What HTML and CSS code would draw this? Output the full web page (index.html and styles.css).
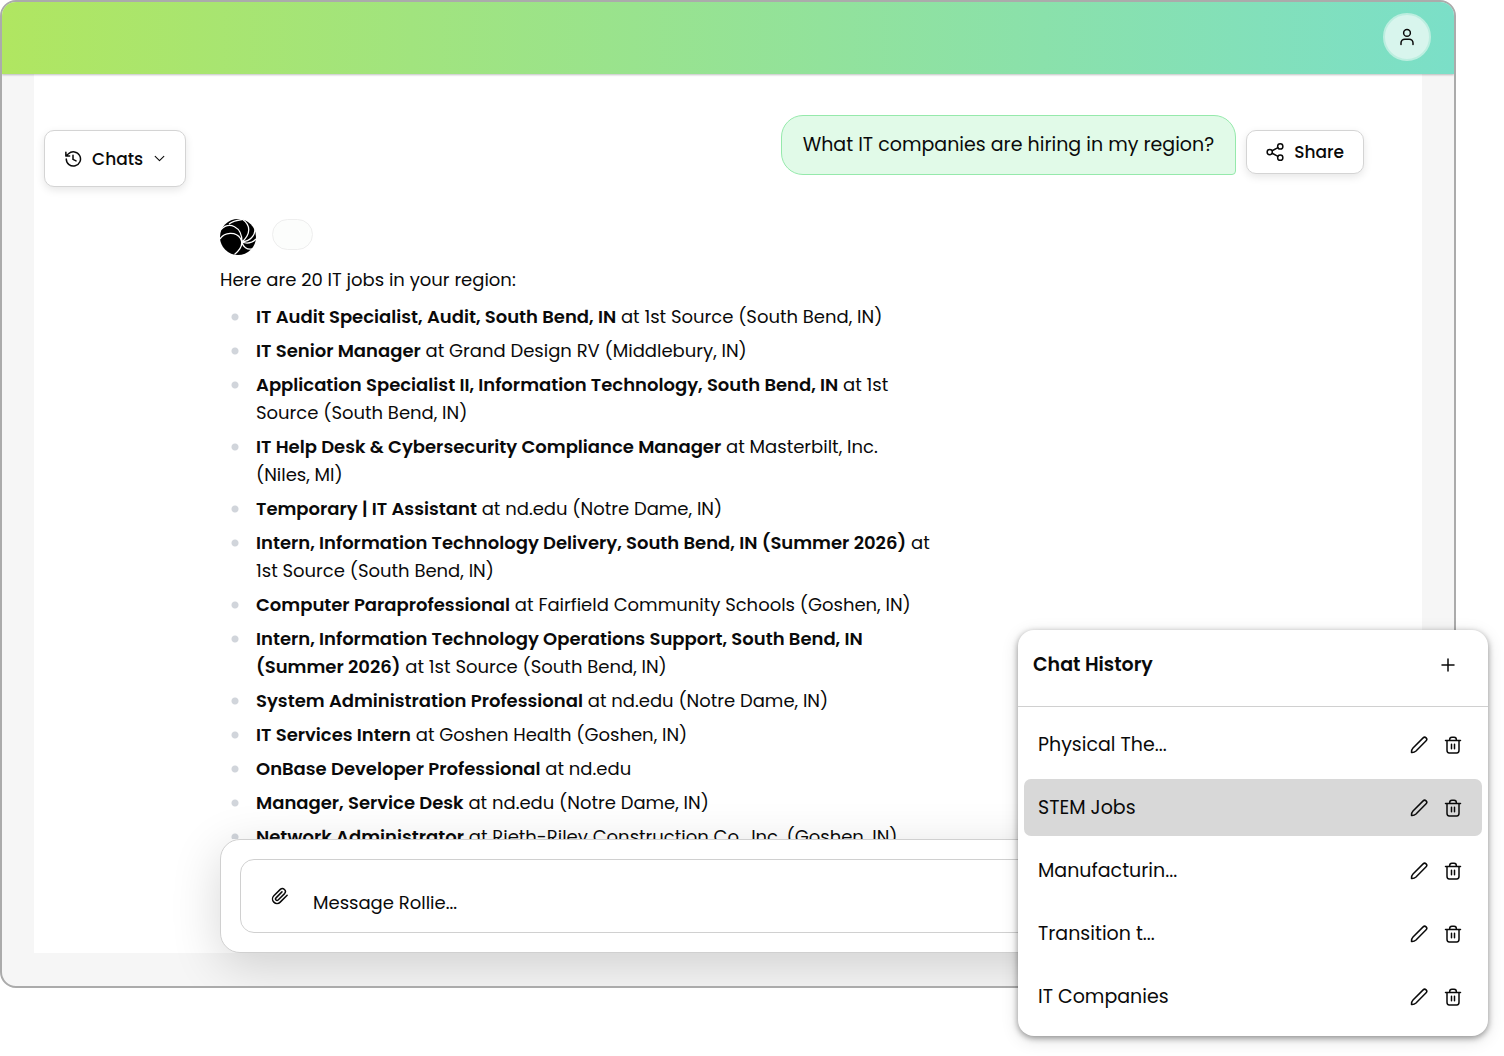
FILE: index.html
```html
<!DOCTYPE html>
<html lang="en">
<head>
    <meta charset="utf-8">
    <title>Rollie</title>
    <link rel="stylesheet" href="styles.css">
</head>
<body>
    <svg class="sprite" aria-hidden="true">
        <symbol id="icon-pencil" viewBox="0 0 24 24">
            <path d="M17.500 2.500a2.700 2.700 0 0 1 4 3.900L8 20c-1.500 1.400-3.600 2.200-6 2-.1-2.400.6-4.500 2-6Z"/>
        </symbol>
        <symbol id="icon-trash" viewBox="0 0 24 24">
            <path d="M2 6h20M4 6v13c0 2 1 3.500 3 3.500h10c2 0 3-1.500 3-3.500V6M7.500 6V5c0-2 1-3.500 3-3.500h3c2 0 3 1.500 3 3.500v1M10 11v6M14 11v6"/>
        </symbol>
    </svg>

    <div class="window">
        <header class="topbar">
            <button class="avatar" type="button" aria-label="Account">
                <svg class="icon" viewBox="0 0 24 24"><circle cx="12" cy="6.500" r="4.500"/><path d="M20 22v-2a5 5 0 0 0-5-5H9a5 5 0 0 0-5 5v2"/></svg>
            </button>
        </header>

        <main class="panel">
            <div class="toolbar">
                <button class="button chats" type="button">
                    <svg class="icon" viewBox="0 0 24 24"><path d="M3 12a9.500 9.500 0 1 0 3-7L2.500 8M2.500 3v5h5M12 7v5.500l4 2"/></svg>
                    Chats
                    <svg class="icon chevron" viewBox="0 0 24 24"><path d="m4 8 8 8 8-8"/></svg>
                </button>
                <p class="question">What IT companies are hiring in my region?</p>
                <button class="button share" type="button">
                    <svg class="icon" viewBox="0 0 24 24"><circle cx="19" cy="4.500" r="3.500"/><circle cx="5" cy="12" r="3.500"/><circle cx="19" cy="19.500" r="3.500"/><path d="m8.200 13.700 7.700 4.200M15.900 6.100l-7.700 4.200"/></svg>
                    Share
                </button>
            </div>

            <div class="conversation">
                <div class="answer">
                    <div class="sender">
                        <svg class="logo" viewBox="0 0 36 36">
                            <circle class="disc" cx="18" cy="18" r="18"/>
                            <path d="M0 20C4 13 16 12 20.500 19.500c3 5.500-.5 11.500-6 16M1 10.500C9 2.500 22 7 22 23M9 5c4-3 9-4 13-4.500M22 0c9 6 9 15 0 23M35 10c0 7-5 12-13 13M36 20c-4 4-9 5-14 3M32 30c-5 1-9-2-10-7"/>
                        </svg>
                        <span class="badge"></span>
                    </div>
                    <p class="intro">Here are 20 IT jobs in your region:</p>
                    <ul class="jobs">
                        <li><strong>IT Audit Specialist, Audit, South Bend, IN</strong> at 1st Source (South Bend, IN)</li>
                        <li><strong>IT Senior Manager</strong> at Grand Design RV (Middlebury, IN)</li>
                        <li><strong>Application Specialist II, Information Technology, South Bend, IN</strong> at 1st Source (South Bend, IN)</li>
                        <li><strong>IT Help Desk &amp; Cybersecurity Compliance Manager</strong> at Masterbilt, Inc. (Niles, MI)</li>
                        <li><strong>Temporary | IT Assistant</strong> at nd.edu (Notre Dame, IN)</li>
                        <li><strong>Intern, Information Technology Delivery, South Bend, IN (Summer 2026)</strong> at 1st Source (South Bend, IN)</li>
                        <li><strong>Computer Paraprofessional</strong> at Fairfield Community Schools (Goshen, IN)</li>
                        <li><strong>Intern, Information Technology Operations Support, South Bend, IN (Summer 2026)</strong> at 1st Source (South Bend, IN)</li>
                        <li><strong>System Administration Professional</strong> at nd.edu (Notre Dame, IN)</li>
                        <li><strong>IT Services Intern</strong> at Goshen Health (Goshen, IN)</li>
                        <li><strong>OnBase Developer Professional</strong> at nd.edu</li>
                        <li><strong>Manager, Service Desk</strong> at nd.edu (Notre Dame, IN)</li>
                        <li><strong>Network Administrator</strong> at Rieth-Riley Construction Co., Inc. (Goshen, IN)</li>
                    </ul>
                </div>
            </div>

            <form class="composer">
                <div class="composer-box">
                    <button class="icon-button" type="button" aria-label="Attach a file">
                        <svg class="icon" viewBox="0 0 24 24"><path d="m21.500 11-9.200 9.200a6 6 0 0 1-8.500-8.500l8.600-8.500a4 4 0 0 1 5.700 5.600l-8.600 8.600a2 2 0 0 1-2.800-2.900L14.600 6.500"/></svg>
                    </button>
                    <input class="message" type="text" placeholder="Message Rollie..." aria-label="Message Rollie">
                </div>
            </form>
        </main>
    </div>

    <aside class="history">
        <div class="history-header">
            <h2>Chat History</h2>
            <button class="icon-button" type="button" aria-label="New chat">
                <svg class="icon" viewBox="0 0 24 24"><path d="M4 12h16M12 4v16"/></svg>
            </button>
        </div>
        <ul class="history-list">
            <li>
                <a href="#">Physical The...</a>
                <button class="icon-button" type="button" aria-label="Rename"><svg class="icon"><use href="#icon-pencil"/></svg></button>
                <button class="icon-button" type="button" aria-label="Delete"><svg class="icon"><use href="#icon-trash"/></svg></button>
            </li>
            <li class="active">
                <a href="#">STEM Jobs</a>
                <button class="icon-button" type="button" aria-label="Rename"><svg class="icon"><use href="#icon-pencil"/></svg></button>
                <button class="icon-button" type="button" aria-label="Delete"><svg class="icon"><use href="#icon-trash"/></svg></button>
            </li>
            <li>
                <a href="#">Manufacturin...</a>
                <button class="icon-button" type="button" aria-label="Rename"><svg class="icon"><use href="#icon-pencil"/></svg></button>
                <button class="icon-button" type="button" aria-label="Delete"><svg class="icon"><use href="#icon-trash"/></svg></button>
            </li>
            <li>
                <a href="#">Transition t...</a>
                <button class="icon-button" type="button" aria-label="Rename"><svg class="icon"><use href="#icon-pencil"/></svg></button>
                <button class="icon-button" type="button" aria-label="Delete"><svg class="icon"><use href="#icon-trash"/></svg></button>
            </li>
            <li>
                <a href="#">IT Companies</a>
                <button class="icon-button" type="button" aria-label="Rename"><svg class="icon"><use href="#icon-pencil"/></svg></button>
                <button class="icon-button" type="button" aria-label="Delete"><svg class="icon"><use href="#icon-trash"/></svg></button>
            </li>
        </ul>
    </aside>
</body>
</html>
```

FILE: styles.css
```css
* {
    box-sizing: border-box;
    margin: 0;
    padding: 0;
}

body {
    background: #fff;
    color: #0a0a0a;
    font-family: Poppins, Inter, sans-serif;
    font-size: 18px;
    line-height: 28px;
}

button, input {
    font: inherit;
    color: inherit;
    background: none;
    border: 0;
}

ul {
    list-style: none;
}

.sprite {
    position: absolute;
    width: 0;
    height: 0;
}

.icon {
    display: block;
    width: 18px;
    height: 18px;
    flex-shrink: 0;
    fill: none;
    stroke: currentColor;
    stroke-width: 2;
    stroke-linecap: round;
    stroke-linejoin: round;
}

.icon-button {
    display: flex;
    cursor: pointer;
}

.window {
    display: flex;
    flex-direction: column;
    height: calc(100vh - 68px);
    margin-right: 48px;
    overflow: hidden;
    background: #f6f6f6;
    border: 2px solid #ababab;
    border-radius: 16px;
}

.topbar {
    display: flex;
    justify-content: flex-end;
    align-items: center;
    height: 72px;
    flex-shrink: 0;
    padding: 0 23px 2px;
    background: linear-gradient(90deg, #b0e661, #7bdfc8);
    box-shadow: 0 1px 2px rgba(0, 0, 0, .25);
    z-index: 1;
}

.avatar {
    display: flex;
    align-items: center;
    justify-content: center;
    width: 48px;
    height: 48px;
    border: 2px solid #bdeee0;
    border-radius: 50%;
    background: #d8f5ed;
}

.panel {
    display: flex;
    flex-direction: column;
    flex: 1;
    min-height: 0;
    margin: 0 32px 33px;
    background: #fff;
}

.toolbar {
    display: flex;
    align-items: flex-start;
    gap: 10px;
    padding: 41px 58px 0 10px;
}

.button {
    display: flex;
    align-items: center;
    gap: 10px;
    margin-top: 15px;
    padding: 0 19px;
    background: #fff;
    border: 1px solid #d4d4d4;
    border-radius: 10px;
    box-shadow: 0 3px 8px rgba(0, 0, 0, .1);
    font-size: 17px;
    font-weight: 500;
}

.chats {
    height: 57px;
    margin-right: auto;
}

.chevron {
    width: 13px;
    height: 13px;
}

.share {
    height: 44px;
}

.question {
    padding: 15px 21px;
    background: #e1fae8;
    border: 1px solid #95e9ab;
    border-radius: 22px 22px 4px 22px;
    font-size: 19px;
}

.conversation {
    flex: 1;
    min-height: 0;
    padding: 32px 186px 0;
    overflow: hidden;
}

.answer {
    max-width: 716px;
}

.sender {
    display: flex;
    gap: 16px;
    margin-bottom: 11px;
}

.logo {
    width: 36px;
    height: 36px;
    fill: none;
    stroke: #fff;
    stroke-width: 1.3;
}

.logo .disc {
    fill: #000;
    stroke: none;
}

.badge {
    width: 41px;
    height: 31px;
    background: #fcfdfc;
    border: 1px solid #eee;
    border-radius: 16px;
}

.intro {
    margin-bottom: 9px;
}

.jobs {
    display: flex;
    flex-direction: column;
    gap: 6px;
}

.jobs li {
    display: flow-root;
    padding-left: 36px;
    background: radial-gradient(circle, #d1d5db 3px, transparent 4px) 11px 10px / 8px 8px no-repeat;
}

.jobs strong {
    font-weight: 600;
}

.composer {
    position: relative;
    margin: 0 186px;
    padding: 19px;
    background: #fff;
    border: 1px solid #d0d0d0;
    border-radius: 20px;
    box-shadow: 0 12px 50px rgba(0, 0, 0, .16);
}

.composer-box {
    display: flex;
    align-items: center;
    gap: 24px;
    height: 74px;
    padding: 0 30px;
    border: 1px solid #d0d0d0;
    border-radius: 14px;
}

.message {
    flex: 1;
    min-width: 0;
    padding-top: 14px;
    outline: 0;
}

.message::placeholder {
    color: #0a0a0a;
    opacity: 1;
}

.history {
    position: absolute;
    right: 16px;
    bottom: 20px;
    width: 470px;
    background: #fff;
    border-radius: 16px;
    box-shadow: 0 2px 6px rgba(0, 0, 0, .4), 0 4px 18px rgba(0, 0, 0, .12);
    z-index: 2;
}

.history-header {
    display: flex;
    align-items: center;
    justify-content: space-between;
    height: 77px;
    padding: 0 31px 7px 15px;
    border-bottom: 1px solid #d0d0d0;
}

.history h2 {
    font-size: 19px;
    font-weight: 600;
}

.history-list {
    display: flex;
    flex-direction: column;
    gap: 6px;
    padding: 9px 6px 11px;
}

.history-list li {
    display: flex;
    align-items: center;
    gap: 16px;
    height: 57px;
    padding: 0 20px 0 14px;
    border-radius: 7px;
}

.history-list .active {
    background: #d8d8d8;
}

.history-list a {
    flex: 1;
    color: inherit;
    font-size: 19px;
    text-decoration: none;
}
```
